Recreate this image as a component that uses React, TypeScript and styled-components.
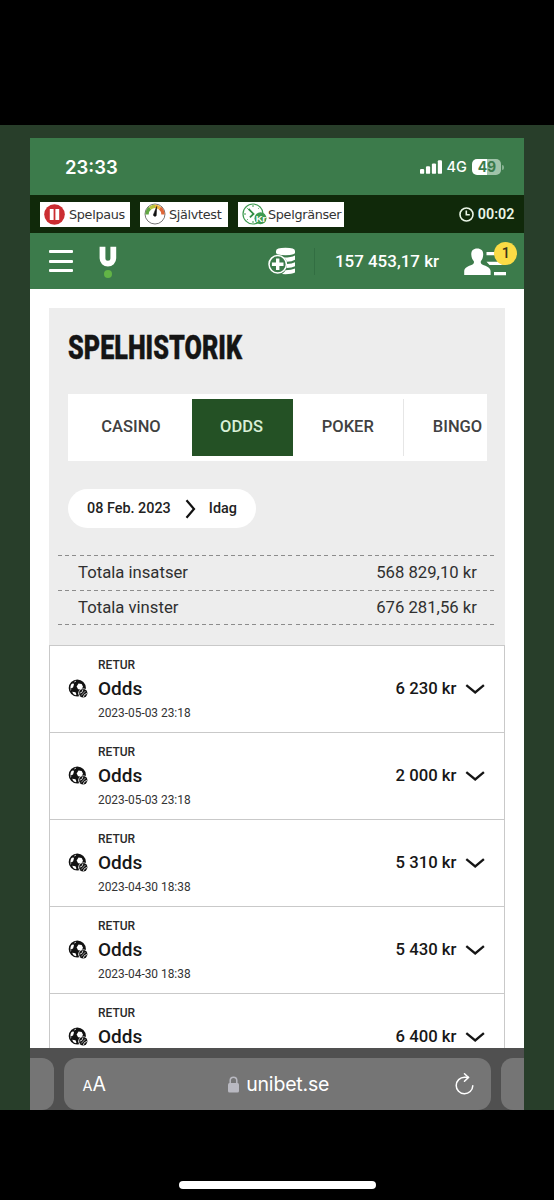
import React from "react";
import styled, { createGlobalStyle } from "styled-components";

const GlobalStyle = createGlobalStyle`
  * { box-sizing: border-box; }
  body { margin: 0; background: #000; font-family: Roboto, "Liberation Sans", sans-serif; }
`;

const Screen = styled.div`
  width: 554px;
  height: 1200px;
  background: #000;
  padding-top: 125px;
  overflow: hidden;
`;
const Backdrop = styled.div`
  height: 985px;
  background: #283e2a;
  padding: 12.5px 29.6px 0 30px;
`;
const Phone = styled.div`
  height: 972.5px;
  background: #fff;
  display: flex;
  flex-direction: column;
  overflow: hidden;
`;
const StatusBar = styled.div`
  height: 57.5px;
  flex: none;
  background: #3c7b4b;
  color: #fff;
  display: flex;
  align-items: center;
  justify-content: space-between;
  padding: 2px 20px 0 35px;
`;
const Clock = styled.span`
  font: 600 18.5px/24px Inter, sans-serif;
`;
const StatusRight = styled.div`
  display: flex;
  align-items: center;
`;
const Network = styled.span`
  font: 500 14.5px/20px Inter, sans-serif;
  margin: 0 5.5px 0 5px;
`;
const Battery = styled.span`
  width: 29px;
  height: 16px;
  border-radius: 5px;
  background: linear-gradient(90deg, #fff 50%, #a0c3a9 50%);
  color: #3c7b4b;
  font: 700 14px/16px Inter, sans-serif;
  text-align: center;
`;
const BatteryTip = styled.span`
  width: 2px;
  height: 5px;
  margin-left: 1px;
  border-radius: 0 2px 2px 0;
  background: #86b191;
`;
const RegBar = styled.div`
  height: 38px;
  flex: none;
  background: #10290a;
  display: flex;
  align-items: center;
  padding: 0 10px 0 10px;
`;
const RegButton = styled.span<{ $width: number; $gap: number }>`
  width: ${(p) => p.$width}px;
  height: 25px;
  margin-right: 10px;
  background: #fff;
  color: #333;
  display: flex;
  align-items: center;
  gap: ${(p) => p.$gap}px;
  padding-left: 4px;
  font: 12.8px/25px "DejaVu Sans", sans-serif;
  letter-spacing: -0.32px;
  white-space: nowrap;
  svg { flex: none; }
`;
const Session = styled.span`
  margin-left: auto;
  display: flex;
  align-items: center;
  gap: 4px;
  color: #e9f5e6;
  font-size: 14.3px;
  font-weight: 600;
`;
const Header = styled.header`
  height: 56px;
  flex: none;
  background: #3c7b4b;
  display: flex;
  align-items: center;
  padding: 0 7px 0 19px;
  color: #fff;
`;
const MenuLines = styled.span`
  width: 24px;
  display: flex;
  flex-direction: column;
  gap: 6.2px;
  &::before, &::after { content: ""; }
  &::before, &::after, i { height: 3px; border-radius: 1px; background: #fff; }
`;
const Logo = styled.svg`
  margin: 2px 0 0 26px;
`;
const Deposit = styled.svg`
  margin-left: auto;
`;
const Divider = styled.span`
  width: 1px;
  height: 27px;
  margin: 0 19.5px 0 19px;
  background: #326e42;
`;
const Balance = styled.span`
  width: 105px;
  font-size: 16.95px;
  font-weight: 500;
  white-space: nowrap;
`;
const Profile = styled.span`
  position: relative;
  width: 53.5px;
  height: 36px;
  margin-left: 24px;
  svg { display: block; }
`;
const Badge = styled.span`
  position: absolute;
  right: 0;
  top: -1.5px;
  width: 23px;
  height: 23px;
  border-radius: 50%;
  background: #fbdc45;
  color: #3b3418;
  font: 500 14.5px/23px Roboto, sans-serif;
  text-align: center;
`;
const Page = styled.main`
  flex: 1;
  min-height: 0;
  overflow: hidden;
  padding: 19px 19px 0 19px;
`;
const Panel = styled.section`
  height: 337px;
  background: #ededed;
  padding-top: 22px;
`;
const Title = styled.h1`
  margin: 0 0 0 19.3px;
  height: 34px;
  width: max-content;
  color: #151515;
  font: 900 33px/35px Roboto, sans-serif;
  transform: scaleX(0.763);
  transform-origin: left;
  -webkit-text-stroke: 0.4px #151515;
`;
const Tabs = styled.nav`
  width: 418.5px;
  height: 67px;
  margin: 30px 0 0 19px;
  padding: 5px;
  background: #fff;
  display: flex;
  overflow: hidden;
`;
const Tab = styled.span<{ $width: number; $active?: boolean; $line?: boolean; $shift?: number }>`
  width: ${(p) => p.$width}px;
  flex: none;
  text-align: center;
  padding-right: ${(p) => p.$shift ?? 0}px;
  font-size: 16.5px;
  font-weight: 500;
  line-height: 55px;
  background: ${(p) => (p.$active ? "#245125" : "transparent")};
  color: ${(p) => (p.$active ? "#d8efd6" : "#414141")};
  border-right: ${(p) => (p.$line ? "1px solid #e6e6e6" : "0")};
`;
const TabClip = styled.div`
  display: flex;
  width: 409px;
  overflow: hidden;
`;
const DateRange = styled.div`
  width: 188px;
  height: 39px;
  margin: 28px 0 0 19px;
  border-radius: 20px;
  background: #fff;
  color: #222;
  display: flex;
  align-items: center;
  padding-left: 19px;
  font-size: 14.4px;
  font-weight: 500;
  white-space: nowrap;
`;
const RangeArrow = styled.svg`
  margin: 0 13px 0 14px;
`;
const Totals = styled.div`
  margin: 27px 9px 0 9px;
`;
const dash = `repeating-linear-gradient(90deg, #8c8c8c 0 4px, transparent 4px 7.2px)`;
const TotalRow = styled.div`
  height: 34.7px;
  display: flex;
  justify-content: space-between;
  padding: 0 19.5px 0 20px;
  color: #303030;
  font-size: 16.7px;
  line-height: 35px;
  background: ${dash} 0 0 / 100% 1.4px no-repeat;
`;
const TotalEnd = styled.div`
  height: 1.4px;
  background: ${dash} 0 0 / 100% 1.4px no-repeat;
`;
const Entry = styled.article`
  height: 87.1px;
  border: 1px solid #c9c9c9;
  border-bottom: 0;
  display: flex;
  align-items: center;
  padding: 0 19px 1px 18px;
  background: #fff;
  color: #171717;
`;
const EntryText = styled.div`
  margin-left: 10px;
  flex: 1;
`;
const Kind = styled.div`
  font-size: 12px;
  font-weight: 500;
  line-height: 22px;
  color: #2a2a2a;
`;
const Name = styled.div`
  font-size: 19px;
  font-weight: 500;
  line-height: 26px;
`;
const Stamp = styled.div`
  font-size: 11.9px;
  line-height: 22px;
  color: #333;
`;
const Amount = styled.span`
  font-size: 16.7px;
  font-weight: 500;
  margin-right: 9px;
`;
const BrowserBar = styled.footer`
  height: 62px;
  flex: none;
  background: #505050;
  padding-top: 10px;
  display: flex;
  gap: 10px;
`;
const SidePage = styled.span<{ $left?: boolean }>`
  width: 23.5px;
  background: #757575;
  border-radius: ${(p) => (p.$left ? "0 12px 12px 0" : "12px 0 0 12px")};
`;
const AddressBar = styled.div`
  flex: 1;
  border-radius: 13px;
  background: #757575;
  color: #fff;
  display: flex;
  align-items: center;
  justify-content: space-between;
  padding: 0 17px 0 19px;
`;
const TextSize = styled.span`
  width: 20px;
  font: 400 19.5px/24px Inter, sans-serif;
  padding-top: 2px;
  white-space: nowrap;
  small { font-size: 14.5px; }
`;
const Site = styled.span`
  display: flex;
  align-items: center;
  gap: 7px;
  font: 400 19.5px/24px Inter, sans-serif;
  letter-spacing: -0.2px;
`;
const HomeIndicator = styled.div`
  width: 197px;
  height: 7.5px;
  border-radius: 4px;
  background: #fff;
  margin: 71px 0 0 179px;
`;

const PauseIcon = () => (
  <svg width="21" height="21" viewBox="0 0 21 21">
    <circle cx="10.5" cy="10.5" r="10.3" fill="#cb2d31" />
    <path d="M5.8 5h3.8v11H5.8zM11.4 5h3.8v11h-3.8z" fill="#fff" />
  </svg>
);
const GaugeIcon = () => (
  <svg width="22" height="22" viewBox="0 0 22 22" fill="none">
    <circle cx="11" cy="11" r="10" fill="#fff" stroke="#777" strokeWidth="1" />
    <path d="M3 11.5a8 8 0 0 1 3-6.300" stroke="#62a744" strokeWidth="3.4" />
    <path d="M6 5.2a8 8 0 0 1 5-2" stroke="#b8c43a" strokeWidth="3.4" />
    <path d="M11 3.2a8 8 0 0 1 5 2" stroke="#f0b43c" strokeWidth="3.4" />
    <path d="M16 5.2a8 8 0 0 1 3 6.300" stroke="#df6638" strokeWidth="3.4" />
    <path d="M12.7 3.5l-.5 9.2a1.6 1.6 0 0 1-2.8-.8z" fill="#111" stroke="#111" strokeWidth=".6" />
  </svg>
);
const LimitIcon = () => (
  <svg width="26" height="22" viewBox="0 0 26 22" fill="none">
    <circle cx="11" cy="11" r="10" fill="#fff" stroke="#3e9b50" strokeWidth="1.2" />
    <path d="M11 2v2M11 18v2M2 11h2M18 11h2M4.7 4.7l1 1M17.3 4.7l-1 1M4.7 17.3l1-1" stroke="#3e9b50" />
    <path d="M6.5 5.8l5 5.2-3.6 3.3" stroke="#2f8c43" strokeWidth="1.8" />
    <circle cx="18.5" cy="15.3" r="6" fill="#3e9b50" />
    <text x="13.800" y="18.800" fill="#fff" fontFamily="Liberation Sans, sans-serif" fontWeight="700" fontSize="9.500">Kr</text>
  </svg>
);
const BallIcon = () => (
  <svg width="20" height="19" viewBox="0 0 20 19">
    <circle cx="9.300" cy="9" r="8.600" fill="#111" />
    <path d="M10.500 4.600l3.200.5 1.300 2.600-1.600 2.700-3.300-.2-1.500-2.600z" fill="#fff" />
    <path d="M3.300 5.200l1.900-1 .8 1.300-1 3-2.700 1.300Q2 7.300 3.300 5.200z" fill="#fff" />
    <path d="M4.200 12.700l3.300.6 1 2.300-1.200.7Q5 15.500 4.200 12.700z" fill="#fff" />
    <path d="M2.200 11l1-.4M6.300 3l1.700-.9" stroke="#fff" strokeWidth=".8" />
    <circle cx="15.200" cy="14.300" r="4.900" fill="#fff" />
    <circle cx="15.200" cy="14.300" r="4.200" fill="#111" />
    <path d="M11.600 14.200q3 0 3.400-3.700M15.300 18.200q.3-3.400 3.900-3.800" fill="none" stroke="#fff" strokeWidth=".8" />
    <path d="M13.200 16.500l4.200-4.400" stroke="#fff" strokeWidth=".6" />
  </svg>
);
const ChevronDown = () => (
  <svg width="20" height="12" viewBox="0 0 20 12" fill="none">
    <path d="M1.3 2.200l8.900 7.300 8.700-7.300" stroke="#151515" strokeWidth="2.300" />
  </svg>
);

const entries = [
  { amount: "6 230 kr", time: "2023-05-03 23:18" },
  { amount: "2 000 kr", time: "2023-05-03 23:18" },
  { amount: "5 310 kr", time: "2023-04-30 18:38" },
  { amount: "5 430 kr", time: "2023-04-30 18:38" },
  { amount: "6 400 kr", time: "" },
];

export default function App() {
  return (
    <Screen>
      <GlobalStyle />
      <Backdrop>
        <Phone>
          <StatusBar>
            <Clock>23:33</Clock>
            <StatusRight>
              <svg width="22" height="14" viewBox="0 0 22.600 14" fill="#fff">
                <rect x="0" y="9" width="4.3" height="5" rx="1.2" />
                <rect x="6.1" y="6.3" width="4.3" height="7.7" rx="1.2" />
                <rect x="12.2" y="3.3" width="4.3" height="10.7" rx="1.2" />
                <rect x="18.3" y="0" width="4.3" height="14" rx="1.2" />
              </svg>
              <Network>4G</Network>
              <Battery>49</Battery>
              <BatteryTip />
            </StatusRight>
          </StatusBar>
          <RegBar>
            <RegButton $width={90} $gap={4}><PauseIcon />Spelpaus</RegButton>
            <RegButton $width={88} $gap={3}><GaugeIcon />Självtest</RegButton>
            <RegButton $width={106} $gap={0}><LimitIcon />Spelgränser</RegButton>
            <Session>
              <svg width="15" height="15" viewBox="0 0 15 15" fill="none" stroke="#e9f5e6" strokeWidth="1.6">
                <circle cx="7.5" cy="7.5" r="6.5" />
                <path d="M7.3 3.5v4.3h3.5" />
              </svg>
              00:02
            </Session>
          </RegBar>
          <Header>
            <MenuLines><i /></MenuLines>
            <Logo width="18" height="33" viewBox="0 0 18 33" fill="none">
              <path d="M3.500 .8v11.500a5.400 5.400 0 0 0 10.800 0V.8" stroke="#fff" strokeWidth="5.800" />
              <circle cx="9" cy="28" r="4" fill="#62b446" />
            </Logo>
            <Deposit width="27" height="28" viewBox="0 0 27 28">
              <path d="M8 4Q8 .8 17.5.8T27 4v2.3q-3 2-9.5 2T8 6.300zM16 10.500q7 0 11-2v4.300q-3 2-8 2-1-2.700-3-4.300zM19 17q5 0 8-1.800v4q-3 1.800-8.300 1.800zM17.500 23.300q6 0 9.500-1.700v4q-4 2-13 1.500 2.500-1.500 3.500-3.800z" fill="#fff" />
              <circle cx="9.700" cy="17.300" r="8.700" fill="#3c7b4b" stroke="#fff" strokeWidth="1.500" />
              <path d="M9.700 11.500v11.600M3.900 17.300h11.600" stroke="#fff" strokeWidth="3.400" />
            </Deposit>
            <Divider />
            <Balance>157 453,17 kr</Balance>
            <Profile>
              <svg width="54" height="36" viewBox="0 0 54 36" fill="#fff">
                <path d="M13.200 5.500c4.200 0 6.300 2.600 6 6.300-.2 3-.9 4.800-2.200 6.300-.7 1 0 3 1.200 3.500 4.600 1.800 8.400 3 8.400 6.900v3.500H.2v-3.500c0-3.900 3.800-5.100 8.300-6.900 1.200-.5 1.900-2.500 1.200-3.500-1.300-1.500-2.200-3.300-2.400-6.300-.3-3.700 1.700-6.300 5.900-6.300z" />
                <path d="M22.500 9h12v3.300h-12zM22.500 18.800h19.500q-1 2.500-5 3.300H25.500zM30 29h12v3.300H30z" />
              </svg>
              <Badge>1</Badge>
            </Profile>
          </Header>
          <Page>
            <Panel>
              <Title>SPELHISTORIK</Title>
              <Tabs>
                <TabClip>
                  <Tab $width={118.500} $shift={2.500}>CASINO</Tab>
                  <Tab $width={101} $active $shift={1}>ODDS</Tab>
                  <Tab $width={111.500} $line>POKER</Tab>
                  <Tab $width={108} $shift={1}>BINGO</Tab>
                </TabClip>
              </Tabs>
              <DateRange>
                <span>08 Feb. 2023</span>
                <RangeArrow width="11" height="20" viewBox="0 0 11 20" fill="none">
                  <path d="M1.500 1.200L9 10l-7.500 8.800" stroke="#111" strokeWidth="2.200" />
                </RangeArrow>
                <span>Idag</span>
              </DateRange>
              <Totals>
                <TotalRow><span>Totala insatser</span><span>568 829,10 kr</span></TotalRow>
                <TotalRow><span>Totala vinster</span><span>676 281,56 kr</span></TotalRow>
                <TotalEnd />
              </Totals>
            </Panel>
            {entries.map((e, i) => (
              <Entry key={i}>
                <BallIcon />
                <EntryText>
                  <Kind>RETUR</Kind>
                  <Name>Odds</Name>
                  <Stamp>{e.time || "\u00a0"}</Stamp>
                </EntryText>
                <Amount>{e.amount}</Amount>
                <ChevronDown />
              </Entry>
            ))}
          </Page>
          <BrowserBar>
            <SidePage $left />
            <AddressBar>
              <TextSize><small>A</small>A</TextSize>
              <Site>
                <svg width="11" height="17" viewBox="0 0 11 17" fill="none">
                  <rect x="0" y="7" width="11" height="9.500" rx="1.500" fill="#b9b9c1" />
                  <path d="M2.200 8V4.500a3.300 3.300 0 0 1 6.600 0V8" stroke="#b9b9c1" strokeWidth="1.500" />
                </svg>
                unibet.se
              </Site>
              <svg width="19" height="23" viewBox="0 0 19 23" fill="none" stroke="#fff" strokeWidth="1.500" strokeLinecap="round">
                <path d="M17.800 12.800a8.300 8.300 0 1 1-8.300-8.600h3.800" />
                <path d="M9.500 .8l4 3.600-4 3.800" />
              </svg>
            </AddressBar>
            <SidePage />
          </BrowserBar>
        </Phone>
      </Backdrop>
      <HomeIndicator />
    </Screen>
  );
}
